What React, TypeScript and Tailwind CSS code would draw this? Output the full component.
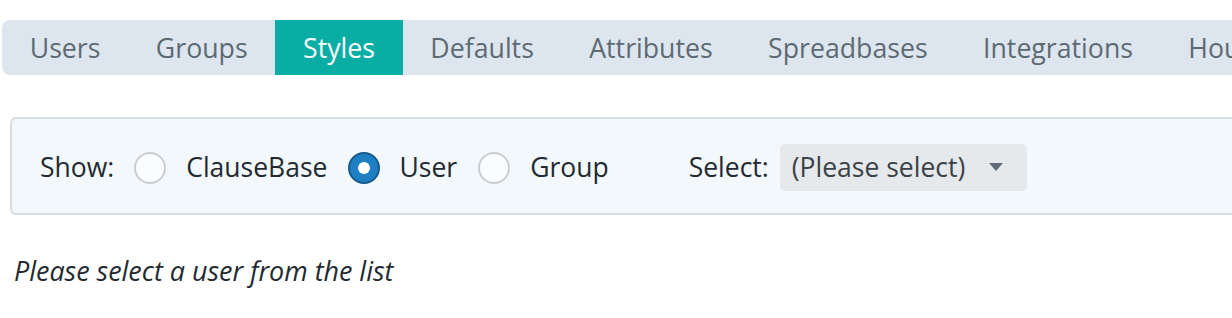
import React from "react";

const tabs = ["Users", "Groups", "Styles", "Defaults", "Attributes", "Spreadbases", "Integrations", "Housekeeping"];

function Radio({ checked }: { checked?: boolean }) {
  if (checked) {
    return (
      <span className="flex h-[32px] w-[32px] shrink-0 items-center justify-center rounded-full border-2 border-[#155a8c] bg-[#1f7fc2]">
        <span className="h-[12px] w-[12px] rounded-full bg-white" />
      </span>
    );
  }
  return <span className="block h-[32px] w-[32px] shrink-0 rounded-full border-2 border-[#c9cdd0] bg-[#fbfcfd]" />;
}

export default function App() {
  return (
    <div className="w-[1232px] h-[318px] overflow-hidden bg-white text-[26.5px] text-[#222a30]" style={{ fontFamily: '"Open Sans", "Noto Sans", sans-serif' }}>
      <div className="pt-[20px] pl-[2px]">
        <div className="flex h-[55px] w-[1300px] rounded-l-[8px] bg-[#dde6ee] text-[26.7px]">
          {tabs.map((t) => (
            <div
              key={t}
              className={
                "flex items-center px-[27.7px] pt-[2px] whitespace-nowrap " +
                (t === "Styles" ? "bg-[#08ada4] text-white" : "text-[#5d6a73]")
              }
            >
              {t}
            </div>
          ))}
        </div>
      </div>
      <div className="pl-[10px] pt-[42px]">
        <div className="flex h-[98px] w-[1240px] items-center rounded-[6px] border-2 border-[#d8dde1] bg-[#f3f8fc] pl-[28px] pt-[3px]">
          <span>Show:</span>
          <span className="ml-[20px] flex"><Radio /></span>
          <span className="ml-[20px]">ClauseBase</span>
          <span className="ml-[21px] flex"><Radio checked /></span>
          <span className="ml-[19px]">User</span>
          <span className="ml-[21px] flex"><Radio /></span>
          <span className="ml-[20px]">Group</span>
          <span className="ml-[80px]">Select:</span>
          <div className="ml-[11px] flex h-[47px] w-[247px] items-center justify-between rounded-[5px] bg-[#e5e9ec] pl-[12px] pr-[24px] text-[#3a4248]">
            <span>(Please select)</span>
            <svg width="14" height="9" viewBox="0 0 14 9">
              <path d="M0 0 L14 0 L7 8 Z" fill="#5d6c78" />
            </svg>
          </div>
        </div>
      </div>
      <div className="pl-[14px] pt-[36px] text-[26.9px] italic">Please select a user from the list</div>
    </div>
  );
}
